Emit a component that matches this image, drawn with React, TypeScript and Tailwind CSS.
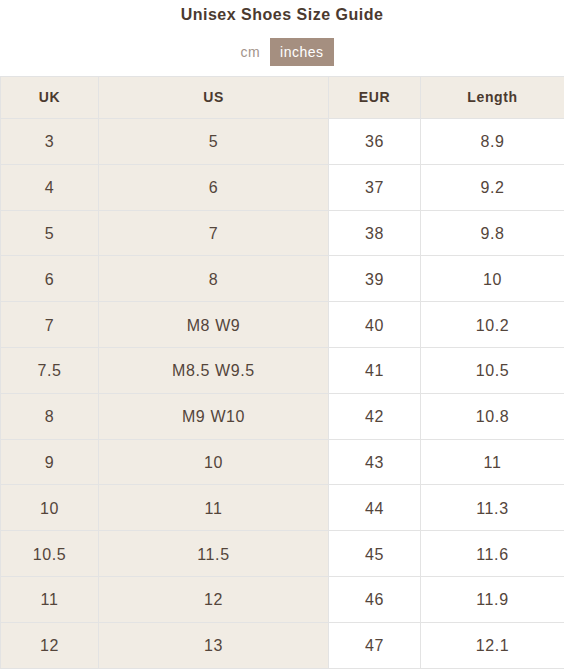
import React from 'react';

const rows: [string, string, string, string][] = [
  ['3', '5', '36', '8.9'],
  ['4', '6', '37', '9.2'],
  ['5', '7', '38', '9.8'],
  ['6', '8', '39', '10'],
  ['7', 'M8 W9', '40', '10.2'],
  ['7.5', 'M8.5 W9.5', '41', '10.5'],
  ['8', 'M9 W10', '42', '10.8'],
  ['9', '10', '43', '11'],
  ['10', '11', '44', '11.3'],
  ['10.5', '11.5', '45', '11.6'],
  ['11', '12', '46', '11.9'],
  ['12', '13', '47', '12.1'],
];

export default function App() {
  return (
    <div className="w-[564px] bg-white font-['Liberation_Sans',Arial,sans-serif] text-[#4a3b31]">
      <h1 className="pt-[5px] text-center text-[16px] font-bold leading-[20px] tracking-[0.5px] text-[#4b3a2f]">
        Unisex Shoes Size Guide
      </h1>

      {/* unit toggle */}
      <div className="mt-[13px] flex justify-center">
        <div className="flex items-center tracking-[0.5px]">
          <span className="px-[10px] text-[14px] leading-[28px] text-[#a3948b]">cm</span>
          <span className="bg-[#a58f80] px-[10px] text-[14px] leading-[28px] text-white">inches</span>
        </div>
      </div>

      <table className="mt-[10px] w-[564px] table-fixed border-collapse text-center">
        <colgroup>
          <col className="w-[98px]" />
          <col className="w-[230px]" />
          <col className="w-[92px]" />
          <col className="w-[144px]" />
        </colgroup>
        <thead>
          <tr className="h-[42px] bg-[#f1ece4]">
            {['UK', 'US', 'EUR', 'Length'].map((h) => (
              <th
                key={h}
                className="border border-[#e3e3e3] text-[14px] font-bold tracking-[0.6px] text-[#4b3a2f]"
              >
                {h}
              </th>
            ))}
          </tr>
        </thead>
        <tbody>
          {rows.map((r, i) => (
            <tr key={i} className="h-[45.8px] text-[16px] tracking-[0.6px] text-[#54453b]">
              <td className="border border-[#e3e3e3] bg-[#f1ece4] pt-[2px]">{r[0]}</td>
              <td className="border border-[#e3e3e3] bg-[#f1ece4] pt-[2px]">{r[1]}</td>
              <td className="border border-[#e3e3e3] bg-white pt-[2px]">{r[2]}</td>
              <td className="border border-[#e3e3e3] bg-white pt-[2px]">{r[3]}</td>
            </tr>
          ))}
        </tbody>
      </table>
    </div>
  );
}
